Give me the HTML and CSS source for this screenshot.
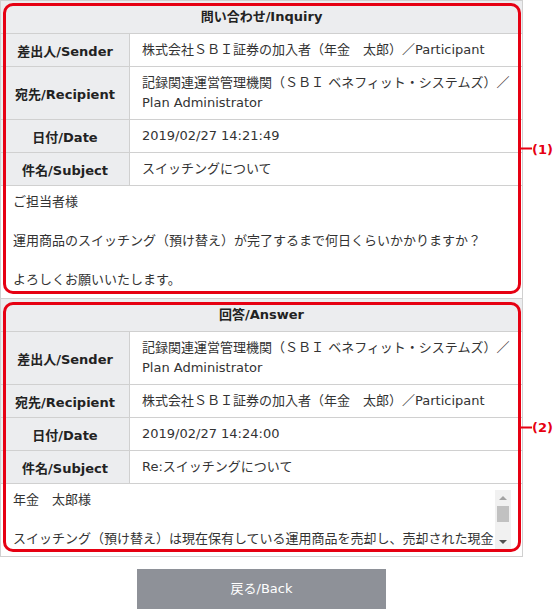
FILE: index.html
```html
<!DOCTYPE html>
<html lang="ja">
<head>
<meta charset="utf-8">
<title>問い合わせ詳細</title>
<link rel="stylesheet" href="styles.css">
</head>
<body>
<main class="page">
  <div class="sheet">
    <section class="msg">
      <h2 class="msg-head">問い合わせ/Inquiry</h2>
      <dl class="fields">
        <dt>差出人/Sender</dt>
        <dd>株式会社ＳＢＩ証券の加入者（年金　太郎）／Participant</dd>
        <dt>宛先/Recipient</dt>
        <dd><span class="nowrap">記録関連運営管理機関（ＳＢＩ ベネフィット・システムズ）／</span><br>Plan Administrator</dd>
        <dt>日付/Date</dt>
        <dd>2019/02/27 14:21:49</dd>
        <dt>件名/Subject</dt>
        <dd>スイッチングについて</dd>
      </dl>
      <div class="msg-body">
        <p>ご担当者様</p>
        <p>運用商品のスイッチング（預け替え）が完了するまで何日くらいかかりますか？</p>
        <p>よろしくお願いいたします。</p>
      </div>
      <div class="mark"><span class="tag">(1)</span></div>
    </section>
    <section class="msg">
      <h2 class="msg-head">回答/Answer</h2>
      <dl class="fields">
        <dt>差出人/Sender</dt>
        <dd><span class="nowrap">記録関連運営管理機関（ＳＢＩ ベネフィット・システムズ）／</span><br>Plan Administrator</dd>
        <dt>宛先/Recipient</dt>
        <dd>株式会社ＳＢＩ証券の加入者（年金　太郎）／Participant</dd>
        <dt>日付/Date</dt>
        <dd>2019/02/27 14:24:00</dd>
        <dt>件名/Subject</dt>
        <dd>Re:スイッチングについて</dd>
      </dl>
      <div class="msg-body msg-body--scroll">
        <div class="scroll-frame">
          <div class="scroll">
            <p>年金　太郎様</p>
            <p>スイッチング（預け替え）は現在保有している運用商品を売却し、売却された現金で新たに運用商品を購入するお取引です。</p>
          </div>
          <div class="scrollbar" aria-hidden="true">
            <span class="sb-btn sb-btn--up"></span>
            <span class="sb-track"><span class="sb-thumb"></span></span>
            <span class="sb-btn sb-btn--down"></span>
          </div>
        </div>
      </div>
      <div class="mark"><span class="tag">(2)</span></div>
    </section>
  </div>
  <div class="actions">
    <button class="back" type="button">戻る/Back</button>
  </div>
</main>
</body>
</html>
```

FILE: styles.css
```css
* {
  box-sizing: border-box;
}

body {
  margin: 0;
  font-family: "DejaVu Sans", "Noto Sans CJK JP", sans-serif;
  font-size: 13px;
  color: #333;
  background: #fff;
}

.page {
  width: 523px;
}

.sheet {
  border: 1px solid #d0d0d0;
  background: #fff;
}

.msg {
  position: relative;
}

.msg + .msg {
  border-top: 1px solid #d0d0d0;
}

.msg-head {
  margin: 0;
  padding: 6px 12px;
  line-height: 20px;
  font-size: 13px;
  font-weight: bold;
  text-align: center;
  color: #222;
  background: #ecedef;
  border-bottom: 1px solid #d0d0d0;
}

.fields {
  margin: 0;
  display: grid;
  grid-template-columns: 129px 1fr;
}

.fields dt {
  display: flex;
  align-items: center;
  justify-content: center;
  font-weight: bold;
  color: #222;
  background: #ecedef;
  border-right: 1px solid #d0d0d0;
  border-bottom: 1px solid #d0d0d0;
}

.fields dd {
  margin: 0;
  padding: 6px 12px;
  line-height: 20px;
  border-bottom: 1px solid #d0d0d0;
}

.nowrap {
  white-space: nowrap;
}

.msg-body {
  padding: 6px 12px 8.5px;
  line-height: 19.5px;
}

.msg-body p {
  margin: 0;
}

.msg-body p + p {
  margin-top: 19.5px;
}

.msg-body--scroll {
  padding: 6px 11px 6px 12px;
}

.scroll-frame {
  display: flex;
  height: 60px;
}

.scroll {
  flex: 1;
  min-width: 0;
  overflow-y: auto;
  overflow-x: hidden;
  scrollbar-width: none;
}

.scrollbar {
  width: 16px;
  flex: none;
  display: flex;
  flex-direction: column;
  background: #f1f1f1;
}

.sb-btn {
  height: 16px;
  flex: none;
  display: flex;
  align-items: center;
  justify-content: center;
}

.sb-btn::before {
  content: "";
  width: 0;
  height: 0;
  border-left: 4px solid transparent;
  border-right: 4px solid transparent;
}

.sb-btn--up::before {
  border-bottom: 4px solid #a3a3a3;
}

.sb-btn--down::before {
  border-top: 4px solid #505050;
}

.sb-track {
  flex: 1;
  display: flex;
  flex-direction: column;
  padding: 0 2px;
}

.sb-thumb {
  height: 16px;
  background: #c1c1c1;
}

.mark {
  position: absolute;
  top: 2px;
  right: 1px;
  bottom: 4px;
  left: 2px;
  border: 3px solid #e60012;
  border-radius: 10px;
  pointer-events: none;
}

.msg + .msg .mark {
  top: 3px;
}

.tag {
  position: absolute;
  top: 50%;
  left: calc(100% + 3px);
  transform: translateY(-50%);
  display: flex;
  align-items: center;
  font-size: 13px;
  font-weight: bold;
  line-height: 1;
  color: #e60012;
  white-space: nowrap;
}

.tag::before {
  content: "";
  width: 11px;
  height: 2px;
  background: #e60012;
}

.actions {
  display: flex;
  justify-content: center;
  padding-top: 12px;
}

.back {
  width: 249px;
  height: 40px;
  padding: 0;
  border: 0;
  font: inherit;
  font-size: 13px;
  line-height: 40px;
  color: #fff;
  background: #8e9198;
}
```
